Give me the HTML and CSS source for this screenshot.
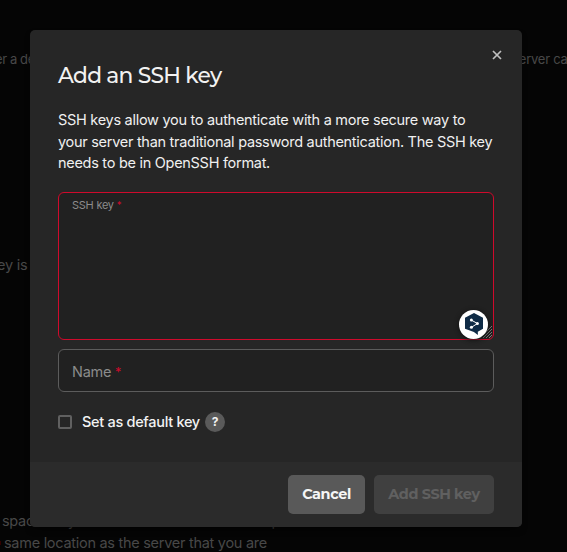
FILE: index.html
```html
<!DOCTYPE html>
<html lang="en">
<head>
<meta charset="utf-8">
<title>Add an SSH key</title>
<link rel="stylesheet" href="styles.css">
</head>
<body>
<main class="page">
  <p class="intro"><span class="intro-start">er a de</span><span>erver can</span></p>
  <p class="status">ey is</p>
  <div class="note">
    <p class="note-line"><span>space. Any</span><span class="note-end">p</span></p>
    <p class="note-line note-last"><span class="dot"></span><span class="note-text">same location as the server that you are</span></p>
  </div>
</main>
<section class="dialog" role="dialog" aria-label="Add an SSH key">
  <button class="close" aria-label="Close"><svg width="10" height="10" viewBox="0 0 10 10"><path d="M1 1l8 8M9 1L1 9"/></svg></button>
  <div class="content">
    <h1 class="title">Add an SSH key</h1>
    <p class="description">SSH keys allow you to authenticate with a more secure way to<br>your server than traditional password authentication. The SSH key<br>needs to be in OpenSSH format.</p>
    <div class="field field-key">
      <span>SSH key <span class="required">*</span></span>
      <svg class="grip" width="13" height="15" viewBox="0 0 13 15"><path d="M0 14L12 2M3 14l9-9M6 14l6-6M9 14l3-3"/></svg>
      <div class="badge"><svg width="18" height="22" viewBox="0 0 18 22"><path class="hex" d="M9 0l9 4.800v11l-5.200 3 .1 3.200-4-3L0 15.800V4.800z"/><path class="links" d="M6.200 7l6.200 3.500-6 3.900"/><circle cx="6.400" cy="6.900" r="1.500"/><circle cx="12.400" cy="10.500" r="1.500"/><circle cx="6.400" cy="14.300" r="1.500"/></svg></div>
    </div>
    <div class="field field-name"><span>Name <span class="required">*</span></span></div>
    <div class="option"><span class="checkbox"></span><span class="option-label">Set as default key</span><span class="help">?</span></div>
  </div>
  <footer class="footer"><button class="button cancel">Cancel</button><button class="button submit" disabled>Add SSH key</button></footer>
</section>
</body>
</html>
```
FILE: styles.css
```css
* { box-sizing: border-box; }
body { margin: 0; background: #050505; font-family: Inter, "Liberation Sans", sans-serif; }
p, h1 { margin: 0; font-weight: 400; }
button { border: 0; padding: 0; font-family: inherit; }
.page { height: 552px; overflow: hidden; color: #484848; display: flex; flex-direction: column; white-space: nowrap; }
.intro { display: flex; justify-content: space-between; margin: 49px -8px 0 -5px; font-size: 13px; line-height: 20px; letter-spacing: -.25px; }
.intro-start { letter-spacing: -.4px; }
.status { margin-top: 185px; margin-left: -3px; font-size: 14.5px; line-height: 22px; letter-spacing: -.2px; }
.note { margin-top: 234px; font-size: 14.5px; line-height: 22px; letter-spacing: -.28px; }
.note-line { display: flex; padding-left: 2px; }
.note-end { margin-left: 196px; }
.note-last { align-items: center; padding-left: 0; }
.dot { width: 1px; height: 4px; background: #300; margin-right: 3px; }
.dialog { position: absolute; left: 30px; top: 30px; width: 492px; height: 497px; display: flex; flex-direction: column; background: #262626; border-radius: 5px; overflow: hidden; box-shadow: 0 4px 8px -4px #000; }
.content { flex: 1; padding: 32px 28px 0; }
.close { position: absolute; right: 20px; top: 20px; width: 10px; height: 10px; background: none; display: flex; }
.close path { stroke: #c0c0c0; stroke-width: 1.7; }
.title { color: #f2f2f2; font-family: Montserrat, Inter, sans-serif; font-size: 21.75px; font-weight: 500; line-height: 27px; letter-spacing: -.75px; white-space: nowrap; }
.description { margin-top: 20px; color: #f0f0f0; font-size: 14.5px; line-height: 21.6px; letter-spacing: -.285px; white-space: nowrap; }
.field { position: relative; border: 1px solid #5c5c5c; border-radius: 6px; background: #212121; color: #8c8c8c; }
.field-key { height: 148px; margin-top: 18px; padding: 5px 13px; border-color: #cf0a2c; font-size: 11px; line-height: 15px; letter-spacing: -.25px; }
.required { color: #cf0a2c; font-size: .88em; }
.field-name { height: 43px; margin-top: 9px; padding: 11px 13px; font-size: 14.5px; line-height: 22px; letter-spacing: -.28px; }
.grip { position: absolute; right: 0; bottom: 0; }
.grip path { stroke: #969696; stroke-width: .8; fill: none; }
.badge { position: absolute; right: 5px; bottom: 0; width: 29px; height: 29px; border-radius: 50%; background: #fff; display: flex; align-items: center; justify-content: center; box-shadow: 0 1px 5px #111; }
.hex { fill: #0f2b46; }
.links { stroke: #fff; fill: none; }
.badge circle { fill: #fff; }
.option { display: flex; align-items: center; margin-top: 19px; height: 22px; color: #f2f2f2; font-size: 14.5px; font-weight: 500; letter-spacing: -.3px; white-space: nowrap; }
.checkbox { width: 14px; height: 14px; border: 2px solid #606060; border-radius: 2px; margin-right: 10px; }
.option-label { width: 118px; }
.help { width: 20px; height: 20px; margin-left: 5px; border-radius: 50%; background: #5a5a5a; text-align: center; font-size: 12px; line-height: 20px; font-weight: 700; }
.footer { height: 65px; padding: 13px 28px; background: #2b2b2b; display: flex; justify-content: flex-end; gap: 9px; }
.button { height: 39px; border-radius: 5px; font-family: Montserrat, Inter, sans-serif; font-size: 14.4px; letter-spacing: -.4px; line-height: 37px; font-weight: 700; white-space: nowrap; }
.cancel { width: 77px; background: #595959; color: #f5f5f5; }
.submit { width: 120px; background: #404040; color: #606060; }
```
